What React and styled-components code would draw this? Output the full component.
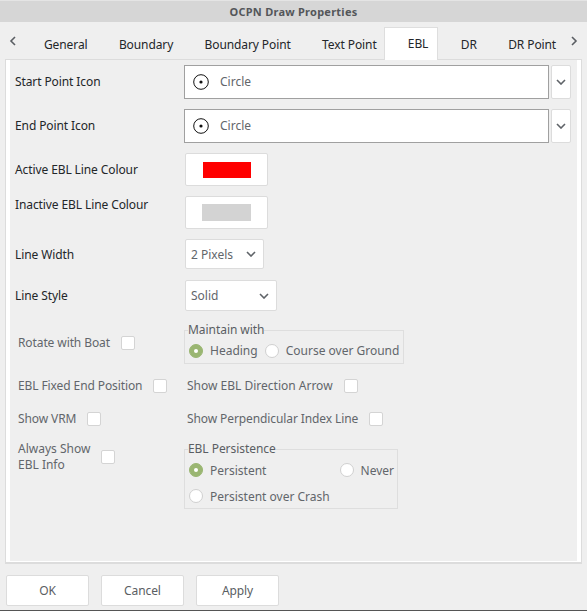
import React from "react";
import styled, { createGlobalStyle } from "styled-components";

const GlobalStyle = createGlobalStyle`
  html, body {
    margin: 0;
    padding: 0;
    background: #efefef;
  }
  body {
    font-family: "Noto Sans", sans-serif;
    font-size: 12px;
    letter-spacing: -0.1px;
    color: #232629;
  }
`;

const Dialog = styled.div`
  width: 587px;
  height: 611px;
  display: flex;
  flex-direction: column;
  background: #efefef;
  border-bottom: 1px solid #555;
  box-sizing: border-box;
`;

const TitleBar = styled.div`
  height: 22px;
  flex: none;
  display: flex;
  align-items: center;
  justify-content: center;
  background: #d6d6d6;
  border-top: 1px solid #e4e4e4;
  box-sizing: border-box;
  font-size: 11px;
  font-weight: 700;
  letter-spacing: 0.25px;
  color: #54565a;
`;

const TabStrip = styled.div`
  height: 37px;
  flex: none;
  display: flex;
  align-items: stretch;
  padding-left: 28.3px;
  box-sizing: border-box;
  position: relative;
`;

const Tab = styled.div`
  display: flex;
  align-items: center;
  padding: 7px 15.7px 0;
  white-space: nowrap;
`;

const ActiveTab = styled.div`
  display: flex;
  align-items: center;
  padding: 0 9px 2px 23px;
  margin: 5px 6.8px -1px -8.5px;
  background: #fff;
  border: 1px solid #dedede;
  border-bottom: none;
  box-sizing: border-box;
  white-space: nowrap;
  position: relative;
  z-index: 1;
`;

const ScrollArrow = styled.svg`
  position: absolute;
  top: 14px;
  left: ${p => p.$left}px;
  width: 8px;
  height: 10px;
  fill: none;
  stroke: #5a5e63;
  stroke-width: 1.6;
`;

const PanelFrame = styled.div`
  height: 505px;
  flex: none;
  margin: 0 5px;
  background: #fff;
  border: solid #dcdcdc;
  border-width: 1px 1px 2px 1px;
  box-sizing: border-box;
  padding: 0 4px 1px 4px;
  display: flex;
`;

const PanelBody = styled.div`
  flex: 1;
  background: #efefef;
  padding-top: 5px;
  padding-left: 5px;
`;

const Row = styled.div`
  display: grid;
  grid-template-columns: 169px 1fr;
  align-items: center;
  margin-bottom: ${p => p.$gap ?? 10}px;
`;

const Label = styled.div`
  color: #232629;
  position: relative;
  top: ${p => p.$raise || 0}px;
`;

const ComboRow = styled.div`
  display: flex;
  gap: 2px;
`;

const ComboField = styled.div`
  width: 365px;
  height: 34px;
  display: flex;
  align-items: center;
  gap: 11px;
  padding: 0 0 1px 8px;
  background: #fff;
  border: 1px solid #a0a0a0;
  box-sizing: border-box;
  color: #62666b;
  letter-spacing: 0;
`;

const ComboButton = styled.div`
  width: 20px;
  height: 34px;
  display: flex;
  align-items: center;
  justify-content: center;
  background: #fff;
  border: 1px solid #dcdcdc;
  border-radius: 2px;
  box-sizing: border-box;
`;

const Chevron = styled.svg`
  width: 10px;
  height: 6px;
  fill: none;
  stroke: #5f6368;
  stroke-width: 1.6;
  flex: none;
`;

const ColourButton = styled.div`
  width: 83px;
  height: 33px;
  margin-left: 1px;
  display: flex;
  align-items: center;
  justify-content: center;
  background: #fff;
  border: 1px solid #dcdcdc;
  border-radius: 2px;
  box-sizing: border-box;
`;

const Swatch = styled.div`
  width: ${p => p.$width}px;
  height: ${p => p.$height}px;
  background: ${p => p.$colour};
`;

const Select = styled.div`
  width: ${p => p.$width}px;
  height: ${p => p.$height}px;
  margin-left: 1px;
  display: flex;
  align-items: center;
  justify-content: space-between;
  padding: 0 7px 0 5px;
  background: #fff;
  border: 1px solid #dcdcdc;
  border-radius: 2px;
  box-sizing: border-box;
  color: #62666b;
  letter-spacing: 0;
`;

const DisabledRow = styled.div`
  display: grid;
  grid-template-columns: 169px 1fr;
  align-items: ${p => (p.$top ? "start" : "center")};
  height: ${p => (p.$height ? `${p.$height}px` : "auto")};
  margin-top: ${p => p.$gap || 0}px;
  margin-left: 3px;
  color: #62666b;
`;

const CheckItem = styled.div`
  display: flex;
  align-items: center;
  gap: 11px;
  line-height: 16px;
  ${p => p.$loose && "letter-spacing: 0;"}
`;

const Checkbox = styled.div`
  width: 14px;
  height: 14px;
  flex: none;
  background: #fff;
  border: 1px solid #d4d4d4;
  border-radius: 2px;
  box-sizing: border-box;
`;

const Group = styled.fieldset`
  width: ${p => p.$width}px;
  height: ${p => p.$height}px;
  margin: 0 0 0 -3px;
  padding: 0 3px 0 4px;
  border: 1px solid #dedede;
  box-sizing: border-box;
  min-width: 0;
`;

const Legend = styled.legend`
  padding: 0;
  margin-left: -1px;
  line-height: 16px;
  letter-spacing: -0.05px;
  color: #5a5e63;
`;

const RadioRow = styled.div`
  display: flex;
  align-items: center;
  justify-content: ${p => (p.$spread ? "space-between" : "flex-start")};
  gap: ${p => p.$gap || 0}px;
  height: ${p => p.$height || 26}px;
`;

const RadioItem = styled.div`
  display: flex;
  align-items: center;
  gap: 7px;
  white-space: nowrap;
  letter-spacing: 0;
`;

const Radio = styled.div`
  width: 14px;
  height: 14px;
  flex: none;
  display: flex;
  align-items: center;
  justify-content: center;
  background: ${p => (p.$on ? "#9ab672" : "#fff")};
  border: 1px solid ${p => (p.$on ? "#9ab672" : "#d0d0d0")};
  border-radius: 50%;
  box-sizing: border-box;
  &::after {
    content: "";
    width: 4px;
    height: 4px;
    border-radius: 50%;
    background: ${p => (p.$on ? "#fff" : "transparent")};
  }
`;

const Footer = styled.div`
  flex: 1;
  display: flex;
  gap: 12px;
  padding: 11px 0 0 6px;
`;

const FooterButton = styled.div`
  width: 83px;
  height: 31px;
  display: flex;
  align-items: center;
  justify-content: center;
  background: #fff;
  border: 1px solid #dcdcdc;
  border-radius: 2px;
  box-sizing: border-box;
  color: #5a5e63;
`;

const ChevronDown = () => (
  <Chevron viewBox="0 0 10 6">
    <path d="M1 1l4 4 4-4" />
  </Chevron>
);

const CircleIcon = () => (
  <svg width="16" height="16" viewBox="0 0 16 16" fill="none" style={{ flex: "none" }}>
    <circle cx="8" cy="8" r="7.3" stroke="#111" strokeWidth="1" />
    <circle cx="8" cy="8" r="1.6" fill="#111" />
  </svg>
);

const tabs = ["General", "Boundary", "Boundary Point", "Text Point", "EBL", "DR", "DR Point"];

const IconCombo = () => (
  <ComboRow>
    <ComboField>
      <CircleIcon />
      Circle
    </ComboField>
    <ComboButton>
      <ChevronDown />
    </ComboButton>
  </ComboRow>
);

export default function App() {
  return (
    <Dialog>
      <GlobalStyle />
      <TitleBar>OCPN Draw Properties</TitleBar>
      <TabStrip>
        <ScrollArrow $left={9} viewBox="0 0 8 10">
          <path d="M6 1L2 5l4 4" />
        </ScrollArrow>
        {tabs.map(t => (t === "EBL" ? <ActiveTab key={t}>{t}</ActiveTab> : <Tab key={t}>{t}</Tab>))}
        <ScrollArrow $left={570} viewBox="0 0 8 10">
          <path d="M2 1l4 4-4 4" />
        </ScrollArrow>
      </TabStrip>
      <PanelFrame>
        <PanelBody>
          <Row>
            <Label $raise={-1}>Start Point Icon</Label>
            <IconCombo />
          </Row>
          <Row>
            <Label $raise={-1}>End Point Icon</Label>
            <IconCombo />
          </Row>
          <Row>
            <Label>Active EBL Line Colour</Label>
            <ColourButton>
              <Swatch $colour="#ff0000" $width={48} $height={16} />
            </ColourButton>
          </Row>
          <Row>
            <Label $raise={-8}>Inactive EBL Line Colour</Label>
            <ColourButton>
              <Swatch $colour="#d3d3d3" $width={49} $height={17} />
            </ColourButton>
          </Row>
          <Row $gap={11}>
            <Label>Line Width</Label>
            <Select $width={79} $height={30}>
              2 Pixels
              <ChevronDown />
            </Select>
          </Row>
          <Row $gap={11}>
            <Label>Line Style</Label>
            <Select $width={92} $height={31}>
              Solid
              <ChevronDown />
            </Select>
          </Row>
          <DisabledRow>
            <CheckItem>
              Rotate with Boat
              <Checkbox />
            </CheckItem>
            <Group $width={220} $height={42}>
              <Legend>Maintain with</Legend>
              <RadioRow $gap={7} $height={25}>
                <RadioItem>
                  <Radio $on />
                  Heading
                </RadioItem>
                <RadioItem>
                  <Radio />
                  Course over Ground
                </RadioItem>
              </RadioRow>
            </Group>
          </DisabledRow>
          <DisabledRow $height={21} $gap={11}>
            <CheckItem>
              EBL Fixed End Position
              <Checkbox />
            </CheckItem>
            <CheckItem $loose>
              Show EBL Direction Arrow
              <Checkbox />
            </CheckItem>
          </DisabledRow>
          <DisabledRow $height={21} $gap={12}>
            <CheckItem>
              Show VRM
              <Checkbox />
            </CheckItem>
            <CheckItem>
              Show Perpendicular Index Line
              <Checkbox />
            </CheckItem>
          </DisabledRow>
          <DisabledRow $top $gap={12}>
            <CheckItem $loose>
              <div>
                Always Show
                <br />
                EBL Info
              </div>
              <Checkbox />
            </CheckItem>
            <Group $width={214} $height={68}>
              <Legend>EBL Persistence</Legend>
              <RadioRow $spread $height={26}>
                <RadioItem>
                  <Radio $on />
                  Persistent
                </RadioItem>
                <RadioItem>
                  <Radio />
                  Never
                </RadioItem>
              </RadioRow>
              <RadioRow $height={26}>
                <RadioItem>
                  <Radio />
                  Persistent over Crash
                </RadioItem>
              </RadioRow>
            </Group>
          </DisabledRow>
        </PanelBody>
      </PanelFrame>
      <Footer>
        <FooterButton>OK</FooterButton>
        <FooterButton>Cancel</FooterButton>
        <FooterButton>Apply</FooterButton>
      </Footer>
    </Dialog>
  );
}
